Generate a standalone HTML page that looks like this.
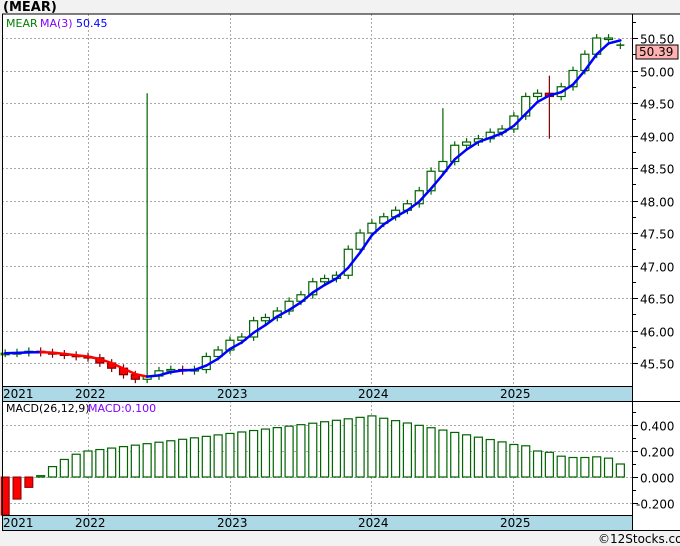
<!DOCTYPE html>
<html><head><meta charset="utf-8"><style>
html,body{margin:0;padding:0;background:#f2f2f2;width:680px;height:546px;overflow:hidden}
svg{display:block}
text{font-family:"DejaVu Sans","Liberation Sans",sans-serif;font-size:11px}
</style></head><body>
<svg id="s" width="680" height="546" xmlns="http://www.w3.org/2000/svg">
<rect x="0" y="0" width="680" height="546" fill="#f2f2f2"/>
<text x="3" y="11" style="font-size:13px;font-weight:bold" fill="#000">(MEAR)</text>
<rect x="2" y="14" width="678" height="516" fill="#fff"/>
<g id="grid"></g>
<rect x="2" y="386" width="630" height="15" fill="#add8e6"/>
<rect x="2" y="515" width="630" height="15" fill="#add8e6"/>
<g id="c"></g>
<line x1="2" y1="14" x2="680" y2="14" stroke="#000"/>
<line x1="2.5" y1="14" x2="2.5" y2="530" stroke="#000"/>
<line x1="632.5" y1="14" x2="632.5" y2="530" stroke="#000"/>
<line x1="2" y1="386.5" x2="632" y2="386.5" stroke="#000"/>
<line x1="2" y1="401.5" x2="680" y2="401.5" stroke="#000"/>
<line x1="2" y1="515.5" x2="632" y2="515.5" stroke="#000"/>
<line x1="2" y1="530.5" x2="680" y2="530.5" stroke="#000"/>
<g fill="#000">
<text x="3" y="398" style="font-size:12px">2021</text><text x="75" y="398" style="font-size:12px">2022</text><text x="217" y="398" style="font-size:12px">2023</text><text x="358" y="398" style="font-size:12px">2024</text><text x="500" y="398" style="font-size:12px">2025</text>
<text x="3" y="527" style="font-size:12px">2021</text><text x="75" y="527" style="font-size:12px">2022</text><text x="217" y="527" style="font-size:12px">2023</text><text x="358" y="527" style="font-size:12px">2024</text><text x="500" y="527" style="font-size:12px">2025</text>
</g>
<text x="6" y="27" fill="#008000">MEAR</text><text x="40" y="27" fill="#8000ff">MA(3)</text><text x="76" y="27" fill="#0000ff">50.45</text>
<text x="6" y="412" fill="#000">MACD(26,12,9)</text><text x="88" y="412" fill="#8000ff">MACD:0.100</text>
<rect x="636" y="45" width="42" height="14" fill="#ffb0b0" stroke="#000"/>
<text x="639" y="56" style="font-size:12px" fill="#000">50.39</text>
<text x="598" y="543" fill="#000" style="font-size:12px">©12Stocks.com</text>
</svg>
<script>
var NS="http://www.w3.org/2000/svg",g=document.getElementById('c'),gr=document.getElementById('grid');
function el(t,a,p){var e=document.createElementNS(NS,t);for(var k in a)e.setAttribute(k,a[k]);(p||g).appendChild(e);return e;}
function tx(x,y,s,p){var e=el('text',{x:x,y:y,fill:'#000','style':'font-size:12px'},p);e.textContent=s;}
function py(p){return 38+(50.5-p)*65;}
function my(v){return 477-v*130;}
[88,230,371,513].forEach(function(x){el('line',{x1:x+.5,y1:14,x2:x+.5,y2:386,stroke:'#aaa','stroke-dasharray':'2,2'},gr);el('line',{x1:x+.5,y1:401,x2:x+.5,y2:515,stroke:'#aaa','stroke-dasharray':'2,2'},gr);});
for(var p=45.5;p<=50.51;p+=0.5){var y=Math.round(py(p))+.5;el('line',{x1:2,y1:y,x2:632,y2:y,stroke:'#aaa','stroke-dasharray':'2,2'},gr);el('line',{x1:632,y1:y,x2:638,y2:y,stroke:'#000'},gr);
 tx(640,y+5,p.toFixed(2),gr);
 var y2=Math.round(py(p+0.25))+.5;el('line',{x1:632,y1:y2,x2:636,y2:y2,stroke:'#000'},gr);}
[0.4,0.2,0,-0.2].forEach(function(v){var y=Math.round(my(v))+.5;el('line',{x1:2,y1:y,x2:632,y2:y,stroke:'#aaa','stroke-dasharray':'2,2'},gr);el('line',{x1:632,y1:y,x2:638,y2:y,stroke:'#000'},gr);tx(v<0?636:640,y+5,v.toFixed(3),gr);var y2=Math.round(my(v+0.1))+.5;el('line',{x1:632,y1:y2,x2:636,y2:y2,stroke:'#000'},gr);});
var C=[45.65,45.66,45.68,45.66,45.64,45.62,45.60,
45.58,45.50,45.42,45.32,45.25,45.30,45.38,45.40,45.38,45.40,
45.6,45.7,45.85,45.9,46.15,46.2,46.3,46.45,46.55,46.75,46.8,46.85,47.25,47.5,47.65,47.75,47.85,47.95,48.15,48.45,48.6,48.85,48.9,48.95,49.05,49.1,49.3,49.6,49.65,49.6,49.75,50.0,50.25,50.5,50.5,50.39];
var N=C.length;function X(i){return 88+(i-7)*11.83;}
var M=[-0.3,-0.17,-0.08,0.01,0.08,0.135,0.175,0.2];
for(var i=1;i<=24;i++)M.push(0.2+0.27*i/24);
for(var i=1;i<=11;i++)M.push(0.47-0.2*i/11);
M=M.concat([0.25,0.24,0.2,0.19,0.16,0.15,0.15,0.155,0.145,0.10]);
for(var i=0;i<N&&i<M.length;i++){var x=X(i),v=M[i];
 if(v<0){var y2=Math.min(my(v),515);el('rect',{x:x-4,y:477,width:8,height:y2-477,fill:'#f00',stroke:'#800000'});}
 else el('rect',{x:x-4,y:my(v),width:8,height:477-my(v),fill:'#fff',stroke:'#006400','stroke-width':1.2});}
var spikes={12:49.65,37:49.42};
for(var i=0;i<N-1;i++){var o=i?C[i-1]:C[0],c=C[i],x=X(i);var hi=Math.max(o,c)+0.06,lo=Math.min(o,c)-0.06;if(spikes[i])hi=spikes[i];
 if(i==46){hi=49.92;lo=48.95;}
 var up=c>=o,col=up?'#006400':'#800000';
 el('line',{x1:x,y1:py(hi),x2:x,y2:py(lo),stroke:col,'stroke-width':1.2});
 var t=py(Math.max(o,c)),h=Math.max(py(Math.min(o,c))-t,1.5);
 el('rect',{x:x-4,y:t,width:8,height:h,fill:up?'#fff':'#f00',stroke:col,'stroke-width':1.2});}
var xl=X(N-1);el('line',{x1:xl-4,y1:py(50.39),x2:xl+4,y2:py(50.39),stroke:'#006400','stroke-width':1.5});el('line',{x1:xl,y1:py(50.43),x2:xl,y2:py(50.33),stroke:'#006400','stroke-width':1.2});
var A=[];for(var i=0;i<N;i++){var s=0,n=0;for(var j=Math.max(0,i-2);j<=i;j++){s+=C[j];n++;}A.push(s/n);}
for(var i=1;i<N;i++){el('line',{x1:X(i-1),y1:py(A[i-1]),x2:X(i),y2:py(A[i]),stroke:A[i]<A[i-1]?'#f00':'#00f','stroke-width':2.5,'stroke-linecap':'round'});}
</script>
</body></html>
